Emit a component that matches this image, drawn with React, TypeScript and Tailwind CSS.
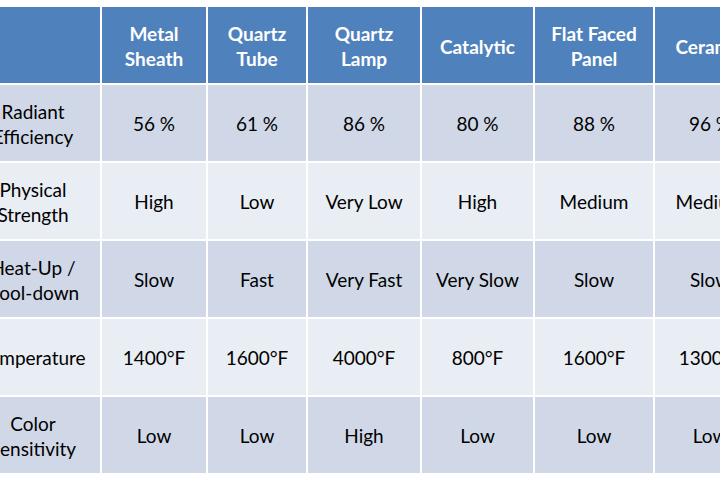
import React from 'react';

const heads = ['', 'Metal\nSheath', 'Quartz\nTube', 'Quartz\nLamp', 'Catalytic', 'Flat Faced\nPanel', 'Ceramic'];

const rows = [
  ['Radiant\nEfficiency', '56 %', '61 %', '86 %', '80 %', '88 %', '96 %'],
  ['Physical\nStrength', 'High', 'Low', 'Very Low', 'High', 'Medium', 'Medium'],
  ['Heat-Up /\nCool-down', 'Slow', 'Fast', 'Very Fast', 'Very Slow', 'Slow', 'Slow'],
  ['Temperature', '1400°F', '1600°F', '4000°F', '800°F', '1600°F', '1300°F'],
  ['Color\nSensitivity', 'Low', 'Low', 'High', 'Low', 'Low', 'Low'],
];

const Lines = ({ text }: { text: string }) => (
  <>
    {text.split('\n').map((t, i) => (
      <span key={i} className="block whitespace-nowrap">{t}</span>
    ))}
  </>
);

const App = () => {
  return (
    <div className="w-[720px] h-[480px] overflow-hidden bg-white pt-[7px]" style={{ fontFamily: 'Lato, "Noto Sans", sans-serif' }}>
      {/* Comparison table, cropped at both sides like the slide */}
      <div className="ml-[-34px] w-[800px] grid grid-cols-[134px_104px_98px_112px_111px_118px_110px] gap-[2px] text-[19px] leading-[25px]">
        {heads.map((h, i) => (
          <div key={i} className="h-[76px] pt-[2px] bg-[#4f81bd] text-white font-bold flex flex-col items-center justify-center text-center">
            <Lines text={h} />
          </div>
        ))}
        {rows.map((r, ri) =>
          r.map((c, ci) => (
            <div
              key={`${ri}-${ci}`}
              className={`h-[76px] pt-[1px] flex flex-col items-center justify-center text-center text-black ${ri % 2 === 0 ? 'bg-[#d0d8e8]' : 'bg-[#e9edf4]'}`}
            >
              <Lines text={c} />
            </div>
          ))
        )}
      </div>
    </div>
  );
};

export default App;
